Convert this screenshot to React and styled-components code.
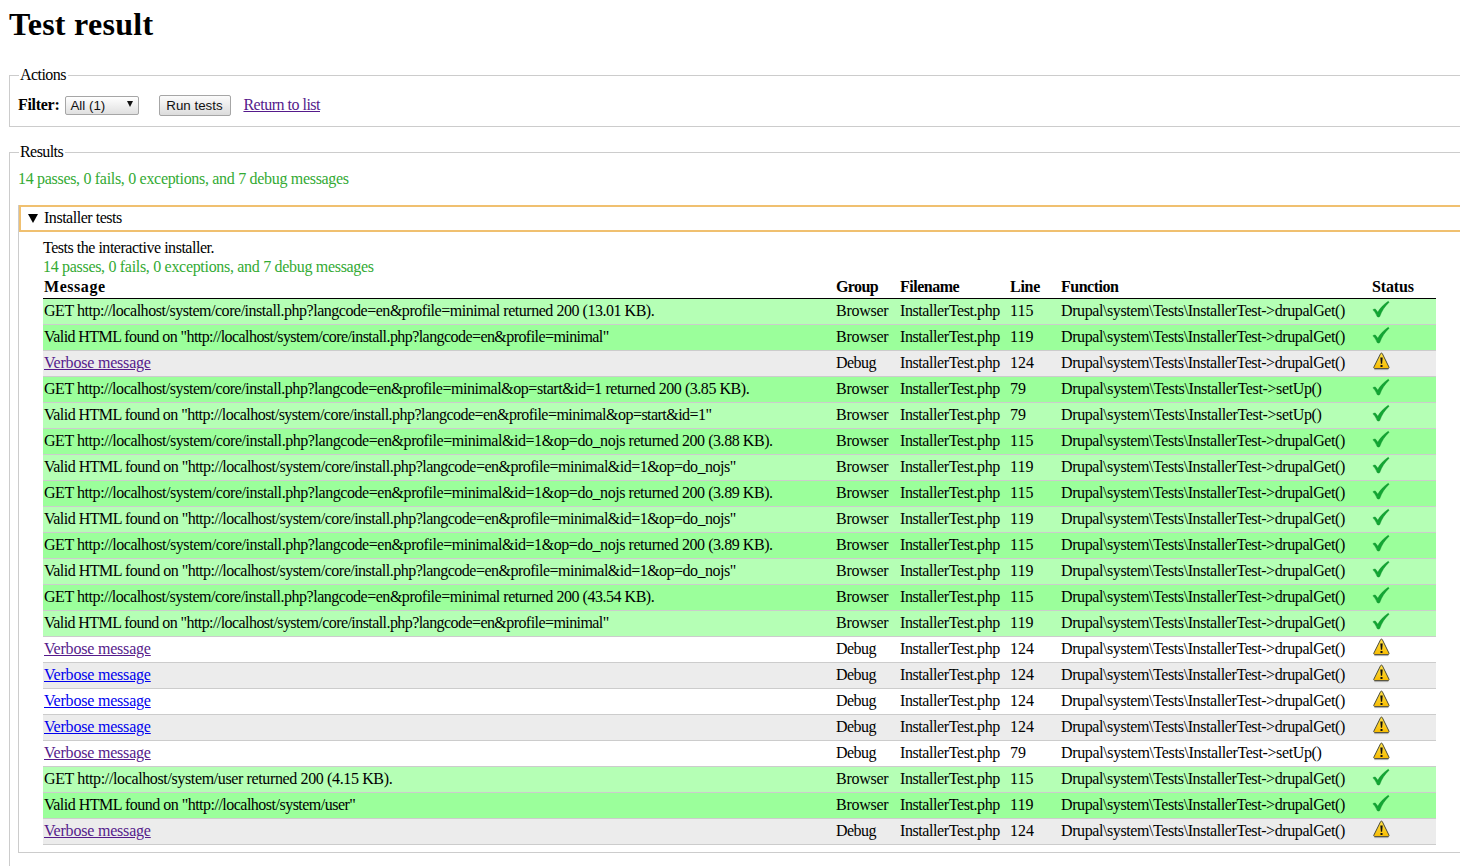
import React from 'react';
import styled, { createGlobalStyle } from 'styled-components';

const Global = createGlobalStyle`
  html, body { margin: 0; padding: 0; background: #fff; height: 866px; overflow: hidden; }
  body { font-family: "Liberation Serif", "Times New Roman", serif; font-size: 16px; line-height: 19px; color: #000; }
  #root { width: 1500px; }
`;
const Page = styled.main`
  width: 1480px;
  padding: 0 0 0 9px;
`;
const Title = styled.h1`
  margin: 0;
  padding: 8px 0 0;
  height: 66px;
  box-sizing: border-box;
  font-size: 32px;
  line-height: 33px;
  font-weight: bold;
  letter-spacing: .27px;
`;
const Group = styled.fieldset`
  margin: ${p => p.$mt || 0}px 0 0;
  min-width: 0;
  padding: ${p => p.$pad};
  border: 1px solid #ccc;
  box-sizing: border-box;
  height: ${p => p.$h}px;
`;
const Legend = styled.legend`
  padding: 0 2px 0 1px;
  margin-left: 1px;
  line-height: 18px;
  height: 18px;
  letter-spacing: -.57px;
`;
const FilterRow = styled.div`
  display: flex;
  align-items: center;
  height: 22px;
`;
const FilterLabel = styled.label`
  font-weight: bold;
  margin-right: 6px;
  padding-bottom: 2px;
  letter-spacing: -.3px;
`;
const SelectWrap = styled.span`
  position: relative;
  display: inline-flex;
  margin-right: 20px;
  &::after {
    content: '';
    position: absolute;
    right: 6px;
    top: 5px;
    border-left: 3.5px solid transparent;
    border-right: 3.5px solid transparent;
    border-top: 6px solid #111;
    pointer-events: none;
  }
`;
const Select = styled.select`
  appearance: none;
  width: 74px;
  height: 19px;
  padding: 0 0 0 4px;
  border: 1px solid #a6a6a6;
  border-radius: 2px;
  background: linear-gradient(#fff, #e0e0e0);
  font: 13.33px "Liberation Sans", Arial, sans-serif;
  color: #111;
`;
const Button = styled.button`
  width: 72px;
  height: 21px;
  padding: 0 2px 0 0;
  border: 1px solid #a6a6a6;
  border-radius: 2px;
  background: linear-gradient(#fbfbfb, #dcdcdc);
  font: 13.33px "Liberation Sans", Arial, sans-serif;
  color: #111;
  margin-right: 12px;
`;
const Link = styled.a`
  color: ${p => (p.$visited ? '#551a8b' : '#0000ee')};
  text-decoration: underline;
  letter-spacing: ${p => p.$sp || 0}px;
`;
const BackLink = styled(Link)`
  padding-bottom: 2px;
`;
const Summary = styled.div`
  color: #33aa33;
  line-height: 19px;
  letter-spacing: -.31px;
`;
const Inner = styled.section`
  margin-top: 17px;
  border: 1px solid #ccc;
  border-top: 0;
  height: 648px;
  box-sizing: border-box;
  width: 1460px;
`;
const Head = styled.div`
  display: flex;
  align-items: center;
  height: 27px;
  box-sizing: border-box;
  border: 2px solid #f0c070;
  border-right: 0;
  padding: 0 0 2px 7px;
  letter-spacing: -.47px;
`;
const Arrow = styled.span`
  width: 0;
  height: 0;
  border-left: 5.5px solid transparent;
  border-right: 5.5px solid transparent;
  border-top: 9px solid #000;
  margin: 2px 6px 0 0;
`;
const Body = styled.div`
  padding: 6px 0 0 24px;
`;
const Description = styled.div`
  letter-spacing: -.48px;
`;
const Table = styled.table`
  border-collapse: collapse;
  table-layout: fixed;
  width: 1393px;
  margin-top: 1px;
`;
const Th = styled.th`
  text-align: left;
  padding: 0 1px 2px;
  height: 19px;
  line-height: 19px;
  border-bottom: 1px solid #000;
  font-weight: bold;
  vertical-align: middle;
  letter-spacing: ${p => p.$sp || 0}px;
`;
const Row = styled.tr`
  background: ${p => p.$bg};
  border-bottom: 1px solid #ccc;
`;
const Td = styled.td`
  padding: 0 1px 2px;
  height: 23px;
  line-height: 19px;
  white-space: nowrap;
  vertical-align: middle;
  letter-spacing: ${p => p.$sp || 0}px;
`;
const IconWrap = styled.span`
  display: block;
  height: 22px;
  margin-top: ${p => p.$top}px;
`;

const Check = () => (
  <IconWrap $top={0}>
    <svg width="18" height="18.6" viewBox="0 0 20 22" preserveAspectRatio="none" aria-hidden="true">
      <path d="M1 11.6 C2.2 10.6 3.4 10.4 4.2 11.2 L6.4 14.4 C9.2 9.4 13 5.2 18 1.6 L19 2.6 C14.2 7.4 10.8 13 8.6 19.6 C7.6 20.6 6.2 20.4 5.6 19.2 C4.6 16.2 3 13.6 1 11.6 Z" fill="#12a633" stroke="#0b8a2a" strokeWidth=".5" />
    </svg>
  </IconWrap>
);
const Warn = () => (
  <IconWrap $top={0}>
    <svg width="20" height="22" viewBox="0 0 20 22" aria-hidden="true">
      <defs>
        <linearGradient id="warnFill" x1="0" y1="0" x2="0" y2="1">
          <stop offset="0" stopColor="#ffe24a" />
          <stop offset="1" stopColor="#f7bb00" />
        </linearGradient>
      </defs>
      <path d="M8.6 1.6 C9 .9 9.9 .9 10.3 1.6 L16.9 15 C17.3 15.8 16.8 16.6 16 16.6 L2.8 16.6 C2 16.6 1.5 15.8 1.9 15 Z" fill="url(#warnFill)" stroke="#4a4a3c" strokeWidth="1" />
      <path d="M2.4 17.6 H16.4" stroke="#a8a8a8" strokeWidth="1" />
      <path d="M8.3 5.6 H10.7 L10.1 11.8 H8.9 Z" fill="#111" />
      <rect x="8.5" y="13" width="2" height="2" fill="#111" />
    </svg>
  </IconWrap>
);

const H = 'http://localhost/system/core/install.php?langcode=en&profile=minimal';
const DG = 'Drupal\\system\\Tests\\InstallerTest->drupalGet()';
const SU = 'Drupal\\system\\Tests\\InstallerTest->setUp()';
const LIGHT = '#b5ffb5', DARK = '#9bff9b', GREY = '#ececec', WHITE = '#ffffff';
const pass = (m, l, f, sp) => ({ m, g: 'Browser', l, f, pass: true, sp });
const dbg = (l, f, v) => ({ g: 'Debug', l, f, v });
const rows = [
  pass(`GET ${H} returned 200 (13.01 KB).`, 115, DG, -.47),
  pass(`Valid HTML found on "${H}"`, 119, DG, -.567),
  dbg(124, DG, true),
  pass(`GET ${H}&op=start&id=1 returned 200 (3.85 KB).`, 79, SU, -.45),
  pass(`Valid HTML found on "${H}&op=start&id=1"`, 79, SU, -.53),
  pass(`GET ${H}&id=1&op=do_nojs returned 200 (3.88 KB).`, 115, DG, -.44),
  pass(`Valid HTML found on "${H}&id=1&op=do_nojs"`, 119, DG, -.51),
  pass(`GET ${H}&id=1&op=do_nojs returned 200 (3.89 KB).`, 115, DG, -.44),
  pass(`Valid HTML found on "${H}&id=1&op=do_nojs"`, 119, DG, -.51),
  pass(`GET ${H}&id=1&op=do_nojs returned 200 (3.89 KB).`, 115, DG, -.44),
  pass(`Valid HTML found on "${H}&id=1&op=do_nojs"`, 119, DG, -.51),
  pass(`GET ${H} returned 200 (43.54 KB).`, 115, DG, -.47),
  pass(`Valid HTML found on "${H}"`, 119, DG, -.567),
  dbg(124, DG, true),
  dbg(124, DG, false),
  dbg(124, DG, false),
  dbg(124, DG, false),
  dbg(79, SU, true),
  pass('GET http://localhost/system/user returned 200 (4.15 KB).', 115, DG, -.37),
  pass('Valid HTML found on "http://localhost/system/user"', 119, DG, -.51),
  dbg(124, DG, true),
];
const SUMMARY = '14 passes, 0 fails, 0 exceptions, and 7 debug messages';

export default function App() {
  return (
    <Page>
      <Global />
      <Title>Test result</Title>
      <Group $h={61} $pad="10px 8px 0" $mt={0}>
        <Legend>Actions</Legend>
        <FilterRow>
          <FilterLabel>Filter:</FilterLabel>
          <SelectWrap>
            <Select defaultValue="all"><option value="all">All (1)</option></Select>
          </SelectWrap>
          <Button type="button">Run tests</Button>
          <BackLink $visited $sp={-.5} href="#list">Return to list</BackLink>
        </FilterRow>
      </Group>
      <Group $h={730} $pad="8px 8px 0" $mt={16}>
        <Legend>Results</Legend>
        <Summary>{SUMMARY}</Summary>
        <Inner>
          <Head><Arrow />Installer tests</Head>
          <Body>
            <Description>Tests the interactive installer.</Description>
            <Summary>{SUMMARY}</Summary>
            <Table>
              <colgroup>
                <col style={{ width: 792 }} />
                <col style={{ width: 64 }} />
                <col style={{ width: 110 }} />
                <col style={{ width: 51 }} />
                <col style={{ width: 311 }} />
                <col style={{ width: 65 }} />
              </colgroup>
              <thead>
                <tr>
                  <Th $sp={.55}>Message</Th>
                  <Th $sp={-.6}>Group</Th>
                  <Th $sp={-.5}>Filename</Th>
                  <Th $sp={-.25}>Line</Th>
                  <Th $sp={-.5}>Function</Th>
                  <Th $sp={-.15}>Status</Th>
                </tr>
              </thead>
              <tbody>
                {rows.map((r, i) => {
                  const odd = i % 2 === 0;
                  const bg = r.pass ? (odd ? LIGHT : DARK) : (odd ? GREY : WHITE);
                  return (
                    <Row key={i} $bg={bg}>
                      <Td $sp={r.sp}>{r.pass ? r.m : <Link $visited={r.v} $sp={-.2} href="#verbose">Verbose message</Link>}</Td>
                      <Td $sp={r.pass ? -.28 : -.55}>{r.g}</Td>
                      <Td $sp={-.41}>InstallerTest.php</Td>
                      <Td>{r.l}</Td>
                      <Td $sp={r.f === DG ? -.41 : -.37}>{r.f}</Td>
                      <Td>{r.pass ? <Check /> : <Warn />}</Td>
                    </Row>
                  );
                })}
              </tbody>
            </Table>
          </Body>
        </Inner>
      </Group>
    </Page>
  );
}
